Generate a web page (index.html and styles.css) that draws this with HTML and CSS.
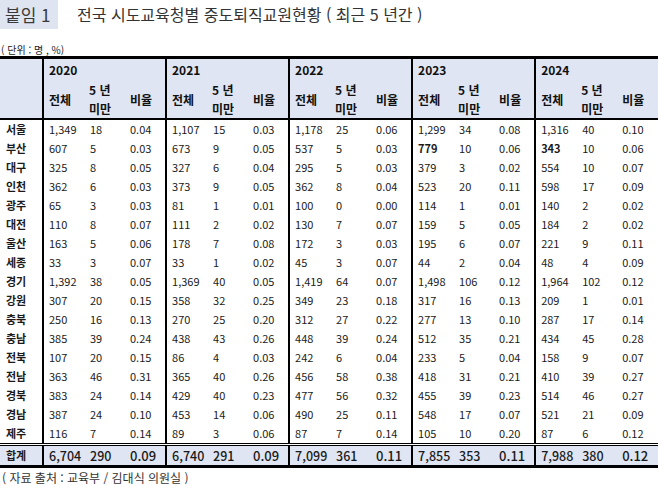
FILE: index.html
```html
<!DOCTYPE html>
<html lang="ko">
<head>
<meta charset="utf-8">
<link rel="stylesheet" href="styles.css">
</head>
<body>
<div class="page">
  <div class="top">
    <div class="tag">붙임 1</div>
    <div class="title">전국 시도교육청별 중도퇴직교원현황 ( 최근 5 년간 )</div>
  </div>
  <div class="unit">( 단위 : 명 , %)</div>
  <table class="tbl">
    <colgroup>
      <col class="c-reg">
      <col class="c-a"><col class="c-b"><col class="c-c">
      <col class="c-a"><col class="c-b"><col class="c-c">
      <col class="c-a"><col class="c-b"><col class="c-c">
      <col class="c-a"><col class="c-b"><col class="c-c">
      <col class="c-a"><col class="c-b"><col class="c-c">
    </colgroup>
    <thead>
      <tr class="yr">
        <th class="reg" rowspan="2"></th>
        <th class="g" colspan="3">2020</th>
        <th class="g" colspan="3">2021</th>
        <th class="g" colspan="3">2022</th>
        <th class="g" colspan="3">2023</th>
        <th class="g" colspan="3">2024</th>
      </tr>
      <tr class="sub">
        <th class="g">전체</th><th class="two"><span class="ln">5 년</span><span class="ln">미만</span></th><th>비율</th>
        <th class="g">전체</th><th class="two"><span class="ln">5 년</span><span class="ln">미만</span></th><th>비율</th>
        <th class="g">전체</th><th class="two"><span class="ln">5 년</span><span class="ln">미만</span></th><th>비율</th>
        <th class="g">전체</th><th class="two"><span class="ln">5 년</span><span class="ln">미만</span></th><th>비율</th>
        <th class="g">전체</th><th class="two"><span class="ln">5 년</span><span class="ln">미만</span></th><th>비율</th>
      </tr>
    </thead>
    <tbody>
      <tr><td class="reg">서울</td><td class="g">1,349</td><td>18</td><td>0.04</td><td class="g">1,107</td><td>15</td><td>0.03</td><td class="g">1,178</td><td>25</td><td>0.06</td><td class="g">1,299</td><td>34</td><td>0.08</td><td class="g">1,316</td><td>40</td><td>0.10</td></tr>
      <tr><td class="reg">부산</td><td class="g">607</td><td>5</td><td>0.03</td><td class="g">673</td><td>9</td><td>0.05</td><td class="g">537</td><td>5</td><td>0.03</td><td class="g b">779</td><td>10</td><td>0.06</td><td class="g b">343</td><td>10</td><td>0.06</td></tr>
      <tr><td class="reg">대구</td><td class="g">325</td><td>8</td><td>0.05</td><td class="g">327</td><td>6</td><td>0.04</td><td class="g">295</td><td>5</td><td>0.03</td><td class="g">379</td><td>3</td><td>0.02</td><td class="g">554</td><td>10</td><td>0.07</td></tr>
      <tr><td class="reg">인천</td><td class="g">362</td><td>6</td><td>0.03</td><td class="g">373</td><td>9</td><td>0.05</td><td class="g">362</td><td>8</td><td>0.04</td><td class="g">523</td><td>20</td><td>0.11</td><td class="g">598</td><td>17</td><td>0.09</td></tr>
      <tr><td class="reg">광주</td><td class="g">65</td><td>3</td><td>0.03</td><td class="g">81</td><td>1</td><td>0.01</td><td class="g">100</td><td>0</td><td>0.00</td><td class="g">114</td><td>1</td><td>0.01</td><td class="g">140</td><td>2</td><td>0.02</td></tr>
      <tr><td class="reg">대전</td><td class="g">110</td><td>8</td><td>0.07</td><td class="g">111</td><td>2</td><td>0.02</td><td class="g">130</td><td>7</td><td>0.07</td><td class="g">159</td><td>5</td><td>0.05</td><td class="g">184</td><td>2</td><td>0.02</td></tr>
      <tr><td class="reg">울산</td><td class="g">163</td><td>5</td><td>0.06</td><td class="g">178</td><td>7</td><td>0.08</td><td class="g">172</td><td>3</td><td>0.03</td><td class="g">195</td><td>6</td><td>0.07</td><td class="g">221</td><td>9</td><td>0.11</td></tr>
      <tr><td class="reg">세종</td><td class="g">33</td><td>3</td><td>0.07</td><td class="g">33</td><td>1</td><td>0.02</td><td class="g">45</td><td>3</td><td>0.07</td><td class="g">44</td><td>2</td><td>0.04</td><td class="g">48</td><td>4</td><td>0.09</td></tr>
      <tr><td class="reg">경기</td><td class="g">1,392</td><td>38</td><td>0.05</td><td class="g">1,369</td><td>40</td><td>0.05</td><td class="g">1,419</td><td>64</td><td>0.07</td><td class="g">1,498</td><td>106</td><td>0.12</td><td class="g">1,964</td><td>102</td><td>0.12</td></tr>
      <tr><td class="reg">강원</td><td class="g">307</td><td>20</td><td>0.15</td><td class="g">358</td><td>32</td><td>0.25</td><td class="g">349</td><td>23</td><td>0.18</td><td class="g">317</td><td>16</td><td>0.13</td><td class="g">209</td><td>1</td><td>0.01</td></tr>
      <tr><td class="reg">충북</td><td class="g">250</td><td>16</td><td>0.13</td><td class="g">270</td><td>25</td><td>0.20</td><td class="g">312</td><td>27</td><td>0.22</td><td class="g">277</td><td>13</td><td>0.10</td><td class="g">287</td><td>17</td><td>0.14</td></tr>
      <tr><td class="reg">충남</td><td class="g">385</td><td>39</td><td>0.24</td><td class="g">438</td><td>43</td><td>0.26</td><td class="g">448</td><td>39</td><td>0.24</td><td class="g">512</td><td>35</td><td>0.21</td><td class="g">434</td><td>45</td><td>0.28</td></tr>
      <tr><td class="reg">전북</td><td class="g">107</td><td>20</td><td>0.15</td><td class="g">86</td><td>4</td><td>0.03</td><td class="g">242</td><td>6</td><td>0.04</td><td class="g">233</td><td>5</td><td>0.04</td><td class="g">158</td><td>9</td><td>0.07</td></tr>
      <tr><td class="reg">전남</td><td class="g">363</td><td>46</td><td>0.31</td><td class="g">365</td><td>40</td><td>0.26</td><td class="g">456</td><td>58</td><td>0.38</td><td class="g">418</td><td>31</td><td>0.21</td><td class="g">410</td><td>39</td><td>0.27</td></tr>
      <tr><td class="reg">경북</td><td class="g">383</td><td>24</td><td>0.14</td><td class="g">429</td><td>40</td><td>0.23</td><td class="g">477</td><td>56</td><td>0.32</td><td class="g">455</td><td>39</td><td>0.23</td><td class="g">514</td><td>46</td><td>0.27</td></tr>
      <tr><td class="reg">경남</td><td class="g">387</td><td>24</td><td>0.10</td><td class="g">453</td><td>14</td><td>0.06</td><td class="g">490</td><td>25</td><td>0.11</td><td class="g">548</td><td>17</td><td>0.07</td><td class="g">521</td><td>21</td><td>0.09</td></tr>
      <tr><td class="reg">제주</td><td class="g">116</td><td>7</td><td>0.14</td><td class="g">89</td><td>3</td><td>0.06</td><td class="g">87</td><td>7</td><td>0.14</td><td class="g">105</td><td>10</td><td>0.20</td><td class="g">87</td><td>6</td><td>0.12</td></tr>
    </tbody>
    <tfoot>
      <tr class="total"><td class="reg">합계</td><td class="g">6,704</td><td>290</td><td class="r">0.09</td><td class="g">6,740</td><td>291</td><td class="r">0.09</td><td class="g">7,099</td><td>361</td><td class="r">0.11</td><td class="g">7,855</td><td>353</td><td class="r">0.11</td><td class="g">7,988</td><td>380</td><td class="r">0.12</td></tr>
    </tfoot>
  </table>
  <div class="source">( 자료 출처 : 교육부 / 김대식 의원실 )</div>
</div>
</body>
</html>
```

FILE: styles.css
```css
html, body {
  margin: 0;
  padding: 0;
  background: #ffffff;
}
body {
  font-family: "Noto Sans CJK KR", "Noto Sans", sans-serif;
  color: #1a1a1a;
}
.page {
  width: 658px;
}
.top {
  display: flex;
  align-items: center;
  height: 29px;
}
.tag {
  width: 58px;
  height: 29px;
  background: #dfe4f1;
  color: #3a3a3a;
  font-size: 17px;
  line-height: 29px;
  padding-left: 5px;
  box-sizing: border-box;
}
.title {
  margin-left: 19px;
  font-size: 16px;
  color: #333333;
  line-height: 29px;
}
.unit {
  margin-top: 14px;
  font-size: 10px;
  line-height: 13px;
  height: 13px;
  color: #222;
  padding-left: 1px;
}
.tbl {
  width: 658px;
  table-layout: fixed;
  border-collapse: collapse;
  border-top: 3px solid #000;
  border-bottom: 3px solid #000;
}
.c-reg { width: 43px; }
.c-a { width: 42px; }
.c-b { width: 40px; }
.c-c { width: 41px; }
.tbl th, .tbl td {
  padding: 0 0 0 5px;
  text-align: left;
  white-space: nowrap;
}
.tbl .g { border-left: 2px solid #000; }
.tbl .reg { border-right: 2px solid #000; padding-left: 6px; }
thead th {
  background: #dfe5f2;
  font-weight: 700;
  font-size: 12px;
  color: #111;
}
.yr th { height: 21px; }
.sub th { height: 38px; }
.ln {
  display: block;
  height: 19px;
  line-height: 19px;
}
thead { border-bottom: 2px solid #000; }
.tbl .sub th.two { padding-left: 4px; }
tbody td {
  height: 19px;
  font-size: 11px;
  line-height: 19px;
}
tbody td.reg { font-weight: 700; font-size: 11px; }
tbody td.b { font-weight: 700; }
tfoot { border-top: 3px double #000; }
.total td {
  background: #dfe5f2;
  height: 19px;
  font-size: 12.5px;
  font-weight: 500;
  line-height: 19px;
}
.total td.reg { font-weight: 700; font-size: 11px; }
.total td.r { font-size: 13px; }
.source {
  margin-top: 3px;
  font-size: 12px;
  color: #333;
  line-height: 14px;
  padding-left: 2px;
}
```
